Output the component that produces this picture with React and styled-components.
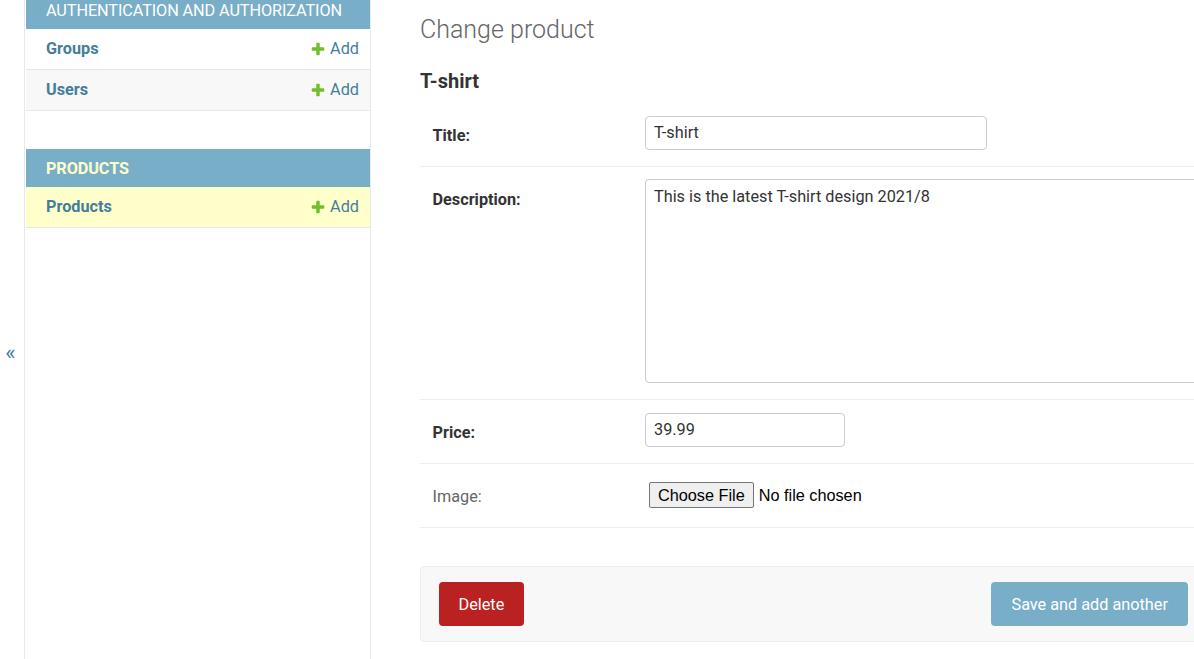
import React from 'react';
import styled, { createGlobalStyle } from 'styled-components';

const Global = createGlobalStyle`
  *, *::before, *::after { box-sizing: border-box; }
  html, body { margin: 0; padding: 0; background: #fff; }
  body {
    font-family: Roboto, "Liberation Sans", Arial, sans-serif;
    color: #333;
    width: 1194px;
    height: 659px;
    overflow: hidden;
  }
`;

const Page = styled.div`
  display: flex;
  align-items: flex-start;
  height: 659px;
  overflow: hidden;
`;

const Toggle = styled.div`
  flex: 0 0 25px;
  height: 659px;
  border-right: 1px solid #e8e8e8;
  display: flex;
  justify-content: center;
  align-items: flex-start;
  padding-top: 341px;
  padding-right: 3px;
  color: #447e9b;
  font-family: Roboto, sans-serif;
  font-size: 22px;
  line-height: 24px;
`;

const Sidebar = styled.nav`
  flex: 0 0 346px;
  width: 346px;
  min-width: 0;
  overflow: hidden;
  height: 668px;
  margin-top: -9px;
  padding-left: 1px;
  border-right: 1px solid #e8e8e8;
`;

const Module = styled.div`
  margin-bottom: 38px;
`;

const Caption = styled.div`
  height: 38px;
  display: flex;
  align-items: center;
  padding: 0 20px;
  background: #79aec8;
  color: ${(p) => (p.$current ? '#ffc' : '#fff')};
  font-weight: ${(p) => (p.$current ? 700 : 400)};
  font-size: 16.25px;
  letter-spacing: -0.1px;
  text-transform: uppercase;
  white-space: nowrap;
  overflow: hidden;
`;

const NavRow = styled.div`
  height: 41px;
  display: flex;
  align-items: center;
  justify-content: space-between;
  padding: 0 11px 1px 20px;
  border-bottom: 1px solid #e8e8e8;
  background: ${(p) => p.$bg || '#fff'};
`;

const NavName = styled.span`
  font-weight: 700;
  font-size: 16.25px;
  color: #447e9b;
`;

const AddLink = styled.span`
  display: flex;
  align-items: center;
  gap: 4px;
  font-size: 16.25px;
  color: #447e9b;
  svg { display: block; }
`;

const Main = styled.main`
  flex: 0 0 1160px;
  margin-top: -9px;
  padding: 26px 0 0 49px;
`;

const Title = styled.h1`
  margin: 0;
  font-weight: 300;
  font-size: 25px;
  line-height: 26px;
  color: #666;
`;

const ObjName = styled.h2`
  margin: 26px 0 10px;
  font-weight: 700;
  font-size: 20px;
  line-height: 24px;
  color: #333;
`;

const Fieldset = styled.div`
  width: 1110px;
  margin-bottom: 38px;
`;

const FormRow = styled.div`
  display: flex;
  align-items: flex-start;
  min-height: 64px;
  padding: 13px 12.5px 16px;
  border-bottom: 1px solid #eee;
`;

const Label = styled.label`
  flex: 0 0 212.5px;
  padding-top: 10px;
  line-height: 20px;
  font-size: 16.25px;
  font-weight: ${(p) => (p.$required ? 700 : 400)};
  color: ${(p) => (p.$required ? '#333' : '#666')};
`;

const TextInput = styled.input`
  width: ${(p) => p.$w}px;
  height: 34px;
  padding: 5px 8px 6px;
  border: 1px solid #ccc;
  border-radius: 4px;
  font-family: Roboto, sans-serif;
  font-size: 16.25px;
  color: #333;
  background: #fff;
  outline: none;
`;

const TextArea = styled.textarea`
  width: 797px;
  height: 204px;
  padding: 7px 8px 6px;
  margin-top: -1px;
  border: 1px solid #ccc;
  border-radius: 4px;
  font-family: Roboto, sans-serif;
  font-size: 16.25px;
  line-height: 20px;
  color: #333;
  resize: none;
  outline: none;
`;

const FileWrap = styled.div`
  padding: 5px 0 0 4px;
`;

const FileInput = styled.input`
  font-family: "Liberation Sans", Arial, sans-serif;
  font-size: 16.25px;
  color: #000;
  &::file-selector-button {
    font-family: "Liberation Sans", Arial, sans-serif;
    font-size: 16.25px;
    color: #000;
    height: 26px;
    padding: 0 8px;
    margin-right: 5px;
    border: 1px solid #767676;
    border-radius: 2px;
    background: #efefef;
  }
`;

const SubmitRow = styled.div`
  width: 1104px;
  display: flex;
  justify-content: space-between;
  align-items: center;
  padding: 15px 17.5px;
  background: #f8f8f8;
  border: 1px solid #eee;
  border-radius: 4px;
`;

const Btn = styled.button`
  height: 44px;
  padding: 0 20px;
  border: 0;
  border-radius: 4px;
  background: ${(p) => p.$bg};
  color: #fff;
  font-family: Roboto, sans-serif;
  font-size: 16.25px;
  font-weight: ${(p) => (p.$bold ? 700 : 400)};
  text-transform: ${(p) => (p.$bold ? 'uppercase' : 'none')};
  white-space: nowrap;
`;

const BtnGroup = styled.div`
  display: flex;
  gap: 6px;
`;

const PlusIcon = () => (
  <svg width="16" height="16" viewBox="0 0 1792 1792">
    <path
      fill="#70bf2b"
      d="M1600 796v192q0 40-28 68t-68 28h-416v416q0 40-28 68t-68 28h-192q-40 0-68-28t-28-68v-416h-416q-40 0-68-28t-28-68v-192q0-40 28-68t68-28h416v-416q0-40 28-68t68-28h192q40 0 68 28t28 68v416h416q40 0 68 28t28 68z"
    />
  </svg>
);

const modules = [
  {
    name: 'Authentication and Authorization',
    items: [
      { name: 'Groups', bg: '#fff' },
      { name: 'Users', bg: '#f8f8f8' },
    ],
  },
  {
    name: 'Products',
    current: true,
    items: [{ name: 'Products', bg: '#ffc' }],
  },
];

export default function App() {
  return (
    <>
      <Global />
      <Page>
        <Toggle>«</Toggle>
        <Sidebar>
          {modules.map((m) => (
            <Module key={m.name}>
              <Caption $current={m.current}>{m.name}</Caption>
              {m.items.map((it) => (
                <NavRow key={it.name} $bg={it.bg}>
                  <NavName>{it.name}</NavName>
                  <AddLink>
                    <PlusIcon />
                    Add
                  </AddLink>
                </NavRow>
              ))}
            </Module>
          ))}
        </Sidebar>
        <Main>
          <Title>Change product</Title>
          <ObjName>T-shirt</ObjName>
          <Fieldset>
            <FormRow>
              <Label $required>Title:</Label>
              <TextInput $w={342} defaultValue="T-shirt" />
            </FormRow>
            <FormRow>
              <Label $required>Description:</Label>
              <TextArea defaultValue="This is the latest T-shirt design 2021/8" />
            </FormRow>
            <FormRow>
              <Label $required>Price:</Label>
              <TextInput $w={200} defaultValue="39.99" />
            </FormRow>
            <FormRow>
              <Label>Image:</Label>
              <FileWrap>
                <FileInput type="file" />
              </FileWrap>
            </FormRow>
          </Fieldset>
          <SubmitRow>
            <Btn $bg="#ba2121">Delete</Btn>
            <BtnGroup>
              <Btn $bg="#79aec8">Save and add another</Btn>
              <Btn $bg="#79aec8">Save and continue editing</Btn>
              <Btn $bg="#417690" $bold>Save</Btn>
            </BtnGroup>
          </SubmitRow>
        </Main>
      </Page>
    </>
  );
}
